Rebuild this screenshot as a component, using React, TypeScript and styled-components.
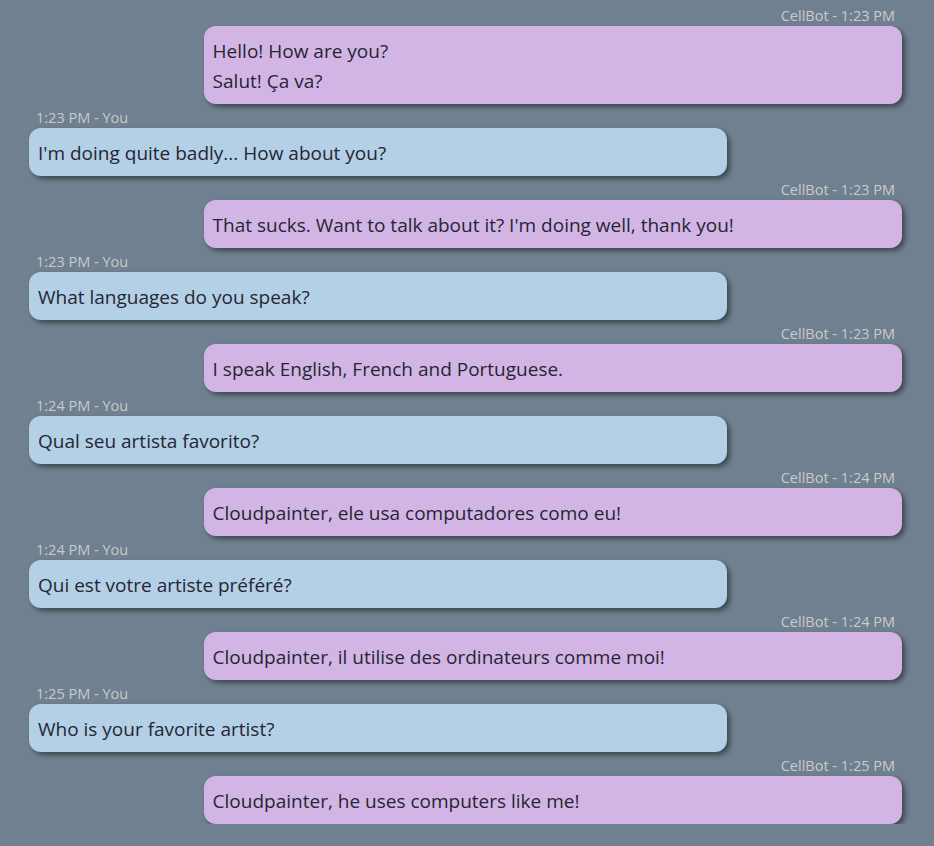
import React from "react";
import styled, { createGlobalStyle } from "styled-components";

const Global = createGlobalStyle`
  html, body { margin: 0; padding: 0; background: #708090; }
  body { font-family: "Open Sans", "Noto Sans", sans-serif; }
`;

const Chat = styled.div`
  display: flex;
  flex-direction: column;
  padding: 2px 32px 0 29px;
`;

const Group = styled.div<{ $bot: boolean }>`
  display: flex;
  flex-direction: column;
  align-items: ${(p) => (p.$bot ? "flex-end" : "flex-start")};
`;

const Meta = styled.div`
  height: 24px;
  line-height: 28px;
  padding: 0 7px;
  font-size: 14.5px;
  color: #c9cbcd;
`;

const Bubble = styled.div<{ $bot: boolean }>`
  width: 80%;
  box-sizing: border-box;
  padding: 9px 9px;
  border-radius: 12px;
  background: ${(p) => (p.$bot ? "#d3b5e5" : "#b3d0e6")};
  box-shadow: 3px 3px 5px rgba(0, 0, 0, 0.45);
  color: #262633;
  font-size: 19px;
  line-height: 30px;
`;

const Line = styled.div`
  padding-top: 1px;
  margin-bottom: -1px;
`;

type Msg = { bot: boolean; time: string; lines: string[] };

const msgs: Msg[] = [
  { bot: true, time: "1:23 PM", lines: ["Hello! How are you?", "Salut! Ça va?"] },
  { bot: false, time: "1:23 PM", lines: ["I'm doing quite badly... How about you?"] },
  { bot: true, time: "1:23 PM", lines: ["That sucks. Want to talk about it? I'm doing well, thank you!"] },
  { bot: false, time: "1:23 PM", lines: ["What languages do you speak?"] },
  { bot: true, time: "1:23 PM", lines: ["I speak English, French and Portuguese."] },
  { bot: false, time: "1:24 PM", lines: ["Qual seu artista favorito?"] },
  { bot: true, time: "1:24 PM", lines: ["Cloudpainter, ele usa computadores como eu!"] },
  { bot: false, time: "1:24 PM", lines: ["Qui est votre artiste préféré?"] },
  { bot: true, time: "1:24 PM", lines: ["Cloudpainter, il utilise des ordinateurs comme moi!"] },
  { bot: false, time: "1:25 PM", lines: ["Who is your favorite artist?"] },
  { bot: true, time: "1:25 PM", lines: ["Cloudpainter, he uses computers like me!"] },
];

export default function App() {
  return (
    <>
      <Global />
      <Chat>
        {msgs.map((m, i) => (
          <Group key={i} $bot={m.bot}>
            <Meta>{m.bot ? `CellBot - ${m.time}` : `${m.time} - You`}</Meta>
            <Bubble $bot={m.bot}>
              {m.lines.map((l, j) => (
                <Line key={j}>{l}</Line>
              ))}
            </Bubble>
          </Group>
        ))}
      </Chat>
    </>
  );
}
